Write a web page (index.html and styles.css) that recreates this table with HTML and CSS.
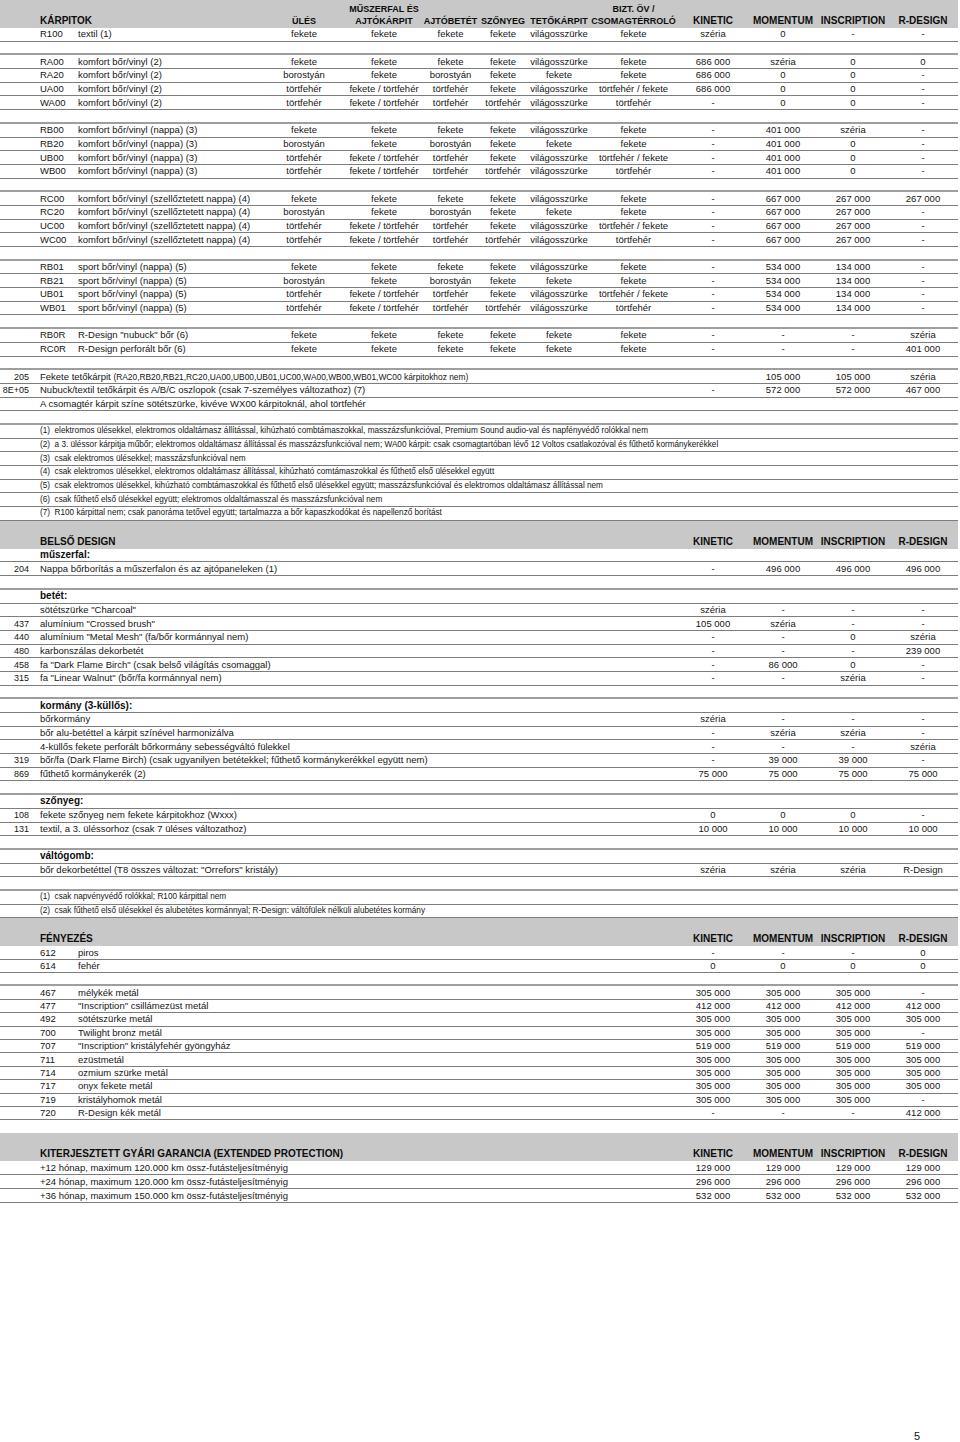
FILE: index.html
```html
<!DOCTYPE html>
<html lang="hu">
<head>
<meta charset="utf-8">
<title>Kárpitok</title>
<link rel="stylesheet" href="styles.css">
</head>
<body>
<div class="sheet">

<section class="sec">
  <div class="grid band">
    <span class="h code-h">KÁRPITOK</span>
    <span class="h hc sm">ÜLÉS</span>
    <span class="h hc sm"><span>MŰSZERFAL ÉS</span><span>AJTÓKÁRPIT</span></span>
    <span class="h hc sm">AJTÓBETÉT</span>
    <span class="h hc sm">SZŐNYEG</span>
    <span class="h hc sm">TETŐKÁRPIT</span>
    <span class="h hc sm"><span>BIZT. ÖV /</span><span>CSOMAGTÉRROLÓ</span></span>
    <span class="h hc">KINETIC</span>
    <span class="h hc">MOMENTUM</span>
    <span class="h hc">INSCRIPTION</span>
    <span class="h hc">R-DESIGN</span>
  </div>

  <div class="grid row"><span class="num"></span><span class="code">R100</span><span class="desc">textil (1)</span><span class="c">fekete</span><span class="c">fekete</span><span class="c">fekete</span><span class="c">fekete</span><span class="c">világosszürke</span><span class="c">fekete</span><span class="c">széria</span><span class="c">0</span><span class="c">-</span><span class="c">-</span></div>
  <div class="grid row gap"></div>

  <div class="grid row"><span class="num"></span><span class="code">RA00</span><span class="desc">komfort bőr/vinyl (2)</span><span class="c">fekete</span><span class="c">fekete</span><span class="c">fekete</span><span class="c">fekete</span><span class="c">világosszürke</span><span class="c">fekete</span><span class="c">686 000</span><span class="c">széria</span><span class="c">0</span><span class="c">0</span></div>
  <div class="grid row"><span class="num"></span><span class="code">RA20</span><span class="desc">komfort bőr/vinyl (2)</span><span class="c">borostyán</span><span class="c">fekete</span><span class="c">borostyán</span><span class="c">fekete</span><span class="c">fekete</span><span class="c">fekete</span><span class="c">686 000</span><span class="c">0</span><span class="c">0</span><span class="c">-</span></div>
  <div class="grid row"><span class="num"></span><span class="code">UA00</span><span class="desc">komfort bőr/vinyl (2)</span><span class="c">törtfehér</span><span class="c">fekete / törtfehér</span><span class="c">törtfehér</span><span class="c">fekete</span><span class="c">világosszürke</span><span class="c">törtfehér / fekete</span><span class="c">686 000</span><span class="c">0</span><span class="c">0</span><span class="c">-</span></div>
  <div class="grid row"><span class="num"></span><span class="code">WA00</span><span class="desc">komfort bőr/vinyl (2)</span><span class="c">törtfehér</span><span class="c">fekete / törtfehér</span><span class="c">törtfehér</span><span class="c">törtfehér</span><span class="c">világosszürke</span><span class="c">törtfehér</span><span class="c">-</span><span class="c">0</span><span class="c">0</span><span class="c">-</span></div>
  <div class="grid row gap"></div>

  <div class="grid row"><span class="num"></span><span class="code">RB00</span><span class="desc">komfort bőr/vinyl (nappa) (3)</span><span class="c">fekete</span><span class="c">fekete</span><span class="c">fekete</span><span class="c">fekete</span><span class="c">világosszürke</span><span class="c">fekete</span><span class="c">-</span><span class="c">401 000</span><span class="c">széria</span><span class="c">-</span></div>
  <div class="grid row"><span class="num"></span><span class="code">RB20</span><span class="desc">komfort bőr/vinyl (nappa) (3)</span><span class="c">borostyán</span><span class="c">fekete</span><span class="c">borostyán</span><span class="c">fekete</span><span class="c">fekete</span><span class="c">fekete</span><span class="c">-</span><span class="c">401 000</span><span class="c">0</span><span class="c">-</span></div>
  <div class="grid row"><span class="num"></span><span class="code">UB00</span><span class="desc">komfort bőr/vinyl (nappa) (3)</span><span class="c">törtfehér</span><span class="c">fekete / törtfehér</span><span class="c">törtfehér</span><span class="c">fekete</span><span class="c">világosszürke</span><span class="c">törtfehér / fekete</span><span class="c">-</span><span class="c">401 000</span><span class="c">0</span><span class="c">-</span></div>
  <div class="grid row"><span class="num"></span><span class="code">WB00</span><span class="desc">komfort bőr/vinyl (nappa) (3)</span><span class="c">törtfehér</span><span class="c">fekete / törtfehér</span><span class="c">törtfehér</span><span class="c">törtfehér</span><span class="c">világosszürke</span><span class="c">törtfehér</span><span class="c">-</span><span class="c">401 000</span><span class="c">0</span><span class="c">-</span></div>
  <div class="grid row gap"></div>

  <div class="grid row"><span class="num"></span><span class="code">RC00</span><span class="desc">komfort bőr/vinyl (szellőztetett nappa) (4)</span><span class="c">fekete</span><span class="c">fekete</span><span class="c">fekete</span><span class="c">fekete</span><span class="c">világosszürke</span><span class="c">fekete</span><span class="c">-</span><span class="c">667 000</span><span class="c">267 000</span><span class="c">267 000</span></div>
  <div class="grid row"><span class="num"></span><span class="code">RC20</span><span class="desc">komfort bőr/vinyl (szellőztetett nappa) (4)</span><span class="c">borostyán</span><span class="c">fekete</span><span class="c">borostyán</span><span class="c">fekete</span><span class="c">fekete</span><span class="c">fekete</span><span class="c">-</span><span class="c">667 000</span><span class="c">267 000</span><span class="c">-</span></div>
  <div class="grid row"><span class="num"></span><span class="code">UC00</span><span class="desc">komfort bőr/vinyl (szellőztetett nappa) (4)</span><span class="c">törtfehér</span><span class="c">fekete / törtfehér</span><span class="c">törtfehér</span><span class="c">fekete</span><span class="c">világosszürke</span><span class="c">törtfehér / fekete</span><span class="c">-</span><span class="c">667 000</span><span class="c">267 000</span><span class="c">-</span></div>
  <div class="grid row"><span class="num"></span><span class="code">WC00</span><span class="desc">komfort bőr/vinyl (szellőztetett nappa) (4)</span><span class="c">törtfehér</span><span class="c">fekete / törtfehér</span><span class="c">törtfehér</span><span class="c">törtfehér</span><span class="c">világosszürke</span><span class="c">törtfehér</span><span class="c">-</span><span class="c">667 000</span><span class="c">267 000</span><span class="c">-</span></div>
  <div class="grid row gap"></div>

  <div class="grid row"><span class="num"></span><span class="code">RB01</span><span class="desc">sport bőr/vinyl (nappa) (5)</span><span class="c">fekete</span><span class="c">fekete</span><span class="c">fekete</span><span class="c">fekete</span><span class="c">világosszürke</span><span class="c">fekete</span><span class="c">-</span><span class="c">534 000</span><span class="c">134 000</span><span class="c">-</span></div>
  <div class="grid row"><span class="num"></span><span class="code">RB21</span><span class="desc">sport bőr/vinyl (nappa) (5)</span><span class="c">borostyán</span><span class="c">fekete</span><span class="c">borostyán</span><span class="c">fekete</span><span class="c">fekete</span><span class="c">fekete</span><span class="c">-</span><span class="c">534 000</span><span class="c">134 000</span><span class="c">-</span></div>
  <div class="grid row"><span class="num"></span><span class="code">UB01</span><span class="desc">sport bőr/vinyl (nappa) (5)</span><span class="c">törtfehér</span><span class="c">fekete / törtfehér</span><span class="c">törtfehér</span><span class="c">fekete</span><span class="c">világosszürke</span><span class="c">törtfehér / fekete</span><span class="c">-</span><span class="c">534 000</span><span class="c">134 000</span><span class="c">-</span></div>
  <div class="grid row"><span class="num"></span><span class="code">WB01</span><span class="desc">sport bőr/vinyl (nappa) (5)</span><span class="c">törtfehér</span><span class="c">fekete / törtfehér</span><span class="c">törtfehér</span><span class="c">törtfehér</span><span class="c">világosszürke</span><span class="c">törtfehér</span><span class="c">-</span><span class="c">534 000</span><span class="c">134 000</span><span class="c">-</span></div>
  <div class="grid row gap"></div>

  <div class="grid row"><span class="num"></span><span class="code">RB0R</span><span class="desc">R-Design "nubuck" bőr (6)</span><span class="c">fekete</span><span class="c">fekete</span><span class="c">fekete</span><span class="c">fekete</span><span class="c">fekete</span><span class="c">fekete</span><span class="c">-</span><span class="c">-</span><span class="c">-</span><span class="c">széria</span></div>
  <div class="grid row"><span class="num"></span><span class="code">RC0R</span><span class="desc">R-Design perforált bőr (6)</span><span class="c">fekete</span><span class="c">fekete</span><span class="c">fekete</span><span class="c">fekete</span><span class="c">fekete</span><span class="c">fekete</span><span class="c">-</span><span class="c">-</span><span class="c">-</span><span class="c">401 000</span></div>
  <div class="grid row gap"></div>

  <div class="grid row"><span class="num">205</span><span class="wide">Fekete tetőkárpit <small class="tiny">(RA20,RB20,RB21,RC20,UA00,UB00,UB01,UC00,WA00,WB00,WB01,WC00 kárpitokhoz nem)</small></span><span class="c"></span><span class="c">105 000</span><span class="c">105 000</span><span class="c">széria</span></div>
  <div class="grid row"><span class="num">8E+05</span><span class="wide">Nubuck/textil tetőkárpit és A/B/C oszlopok (csak 7-személyes változathoz) (7)</span><span class="c">-</span><span class="c">572 000</span><span class="c">572 000</span><span class="c">467 000</span></div>
  <div class="grid row"><span class="num"></span><span class="full">A csomagtér kárpit színe sötétszürke, kivéve WX00 kárpitoknál, ahol törtfehér</span></div>
  <div class="grid row gap"></div>

  <div class="grid row"><span class="num"></span><span class="full note">(1)&nbsp; elektromos ülésekkel, elektromos oldaltámasz állítással, kihúzható combtámaszokkal, masszázsfunkcióval, Premium Sound audio-val és napfényvédő rolókkal nem</span></div>
  <div class="grid row"><span class="num"></span><span class="full note">(2)&nbsp; a 3. üléssor kárpitja műbőr; elektromos oldaltámasz állítással és masszázsfunkcióval nem; WA00 kárpit: csak csomagtartóban lévő 12 Voltos csatlakozóval és fűthető kormánykerékkel</span></div>
  <div class="grid row"><span class="num"></span><span class="full note">(3)&nbsp; csak elektromos ülésekkel; masszázsfunkcióval nem</span></div>
  <div class="grid row"><span class="num"></span><span class="full note">(4)&nbsp; csak elektromos ülésekkel, elektromos oldaltámasz állítással, kihúzható comtámaszokkal és fűthető első ülésekkel együtt</span></div>
  <div class="grid row"><span class="num"></span><span class="full note">(5)&nbsp; csak elektromos ülésekkel, kihúzható combtámaszokkal és fűthető első ülésekkel együtt; masszázsfunkcióval és elektromos oldaltámasz állítással nem</span></div>
  <div class="grid row"><span class="num"></span><span class="full note">(6)&nbsp; csak fűthető első ülésekkel együtt; elektromos oldaltámasszal és masszázsfunkcióval nem</span></div>
  <div class="grid row"><span class="num"></span><span class="full note">(7)&nbsp; R100 kárpittal nem; csak panoráma tetővel együtt; tartalmazza a bőr kapaszkodókat és napellenző borítást</span></div>
</section>

<section class="sec">
  <div class="grid band">
    <span class="h title">BELSŐ DESIGN</span>
    <span class="h hc">KINETIC</span>
    <span class="h hc">MOMENTUM</span>
    <span class="h hc">INSCRIPTION</span>
    <span class="h hc">R-DESIGN</span>
  </div>
  <div class="grid row"><span class="num"></span><span class="full sub">műszerfal:</span></div>
  <div class="grid row"><span class="num">204</span><span class="wide">Nappa bőrborítás a műszerfalon és az ajtópaneleken (1)</span><span class="c">-</span><span class="c">496 000</span><span class="c">496 000</span><span class="c">496 000</span></div>
  <div class="grid row gap"></div>

  <div class="grid row"><span class="num"></span><span class="full sub">betét:</span></div>
  <div class="grid row"><span class="num"></span><span class="wide">sötétszürke "Charcoal"</span><span class="c">széria</span><span class="c">-</span><span class="c">-</span><span class="c">-</span></div>
  <div class="grid row"><span class="num">437</span><span class="wide">alumínium "Crossed brush"</span><span class="c">105 000</span><span class="c">széria</span><span class="c">-</span><span class="c">-</span></div>
  <div class="grid row"><span class="num">440</span><span class="wide">alumínium "Metal Mesh" (fa/bőr kormánnyal nem)</span><span class="c">-</span><span class="c">-</span><span class="c">0</span><span class="c">széria</span></div>
  <div class="grid row"><span class="num">480</span><span class="wide">karbonszálas dekorbetét</span><span class="c">-</span><span class="c">-</span><span class="c">-</span><span class="c">239 000</span></div>
  <div class="grid row"><span class="num">458</span><span class="wide">fa "Dark Flame Birch" (csak belső világítás csomaggal)</span><span class="c">-</span><span class="c">86 000</span><span class="c">0</span><span class="c">-</span></div>
  <div class="grid row"><span class="num">315</span><span class="wide">fa "Linear Walnut" (bőr/fa kormánnyal nem)</span><span class="c">-</span><span class="c">-</span><span class="c">széria</span><span class="c">-</span></div>
  <div class="grid row gap"></div>

  <div class="grid row"><span class="num"></span><span class="full sub">kormány (3-küllős):</span></div>
  <div class="grid row"><span class="num"></span><span class="wide">bőrkormány</span><span class="c">széria</span><span class="c">-</span><span class="c">-</span><span class="c">-</span></div>
  <div class="grid row"><span class="num"></span><span class="wide">bőr alu-betéttel a kárpit színével harmonizálva</span><span class="c">-</span><span class="c">széria</span><span class="c">széria</span><span class="c">-</span></div>
  <div class="grid row"><span class="num"></span><span class="wide">4-küllős fekete perforált bőrkormány sebességváltó fülekkel</span><span class="c">-</span><span class="c">-</span><span class="c">-</span><span class="c">széria</span></div>
  <div class="grid row"><span class="num">319</span><span class="wide">bőr/fa (Dark Flame Birch) (csak ugyanilyen betétekkel; fűthető kormánykerékkel együtt nem)</span><span class="c">-</span><span class="c">39 000</span><span class="c">39 000</span><span class="c">-</span></div>
  <div class="grid row"><span class="num">869</span><span class="wide">fűthető kormánykerék (2)</span><span class="c">75 000</span><span class="c">75 000</span><span class="c">75 000</span><span class="c">75 000</span></div>
  <div class="grid row gap"></div>

  <div class="grid row"><span class="num"></span><span class="full sub">szőnyeg:</span></div>
  <div class="grid row"><span class="num">108</span><span class="wide">fekete szőnyeg nem fekete kárpitokhoz (Wxxx)</span><span class="c">0</span><span class="c">0</span><span class="c">0</span><span class="c">-</span></div>
  <div class="grid row"><span class="num">131</span><span class="wide">textil, a 3. üléssorhoz (csak 7 üléses változathoz)</span><span class="c">10 000</span><span class="c">10 000</span><span class="c">10 000</span><span class="c">10 000</span></div>
  <div class="grid row gap"></div>

  <div class="grid row"><span class="num"></span><span class="full sub">váltógomb:</span></div>
  <div class="grid row"><span class="num"></span><span class="wide">bőr dekorbetéttel (T8 összes változat: "Orrefors" kristály)</span><span class="c">széria</span><span class="c">széria</span><span class="c">széria</span><span class="c">R-Design</span></div>
  <div class="grid row gap"></div>

  <div class="grid row"><span class="num"></span><span class="full note">(1)&nbsp; csak napvényvédő rolókkal; R100 kárpittal nem</span></div>
  <div class="grid row"><span class="num"></span><span class="full note">(2)&nbsp; csak fűthető első ülésekkel és alubetétes kormánnyal; R-Design: váltófülek nélküli alubetétes kormány</span></div>
</section>

<section class="sec paint">
  <div class="grid band">
    <span class="h title">FÉNYEZÉS</span>
    <span class="h hc">KINETIC</span>
    <span class="h hc">MOMENTUM</span>
    <span class="h hc">INSCRIPTION</span>
    <span class="h hc">R-DESIGN</span>
  </div>
  <div class="grid row"><span class="num"></span><span class="code">612</span><span class="mid">piros</span><span class="c">-</span><span class="c">-</span><span class="c">-</span><span class="c">0</span></div>
  <div class="grid row"><span class="num"></span><span class="code">614</span><span class="mid">fehér</span><span class="c">0</span><span class="c">0</span><span class="c">0</span><span class="c">0</span></div>
  <div class="grid row gap"></div>
  <div class="grid row"><span class="num"></span><span class="code">467</span><span class="mid">mélykék metál</span><span class="c">305 000</span><span class="c">305 000</span><span class="c">305 000</span><span class="c">-</span></div>
  <div class="grid row"><span class="num"></span><span class="code">477</span><span class="mid">"Inscription" csillámezüst metál</span><span class="c">412 000</span><span class="c">412 000</span><span class="c">412 000</span><span class="c">412 000</span></div>
  <div class="grid row"><span class="num"></span><span class="code">492</span><span class="mid">sötétszürke metál</span><span class="c">305 000</span><span class="c">305 000</span><span class="c">305 000</span><span class="c">305 000</span></div>
  <div class="grid row"><span class="num"></span><span class="code">700</span><span class="mid">Twilight bronz metál</span><span class="c">305 000</span><span class="c">305 000</span><span class="c">305 000</span><span class="c">-</span></div>
  <div class="grid row"><span class="num"></span><span class="code">707</span><span class="mid">"Inscription" kristályfehér gyöngyház</span><span class="c">519 000</span><span class="c">519 000</span><span class="c">519 000</span><span class="c">519 000</span></div>
  <div class="grid row"><span class="num"></span><span class="code">711</span><span class="mid">ezüstmetál</span><span class="c">305 000</span><span class="c">305 000</span><span class="c">305 000</span><span class="c">305 000</span></div>
  <div class="grid row"><span class="num"></span><span class="code">714</span><span class="mid">ozmium szürke metál</span><span class="c">305 000</span><span class="c">305 000</span><span class="c">305 000</span><span class="c">305 000</span></div>
  <div class="grid row"><span class="num"></span><span class="code">717</span><span class="mid">onyx fekete metál</span><span class="c">305 000</span><span class="c">305 000</span><span class="c">305 000</span><span class="c">305 000</span></div>
  <div class="grid row"><span class="num"></span><span class="code">719</span><span class="mid">kristályhomok metál</span><span class="c">305 000</span><span class="c">305 000</span><span class="c">305 000</span><span class="c">-</span></div>
  <div class="grid row"><span class="num"></span><span class="code">720</span><span class="mid">R-Design kék metál</span><span class="c">-</span><span class="c">-</span><span class="c">-</span><span class="c">412 000</span></div>
</section>

<section class="sec warranty">
  <div class="grid band">
    <span class="h title">KITERJESZTETT GYÁRI GARANCIA (EXTENDED PROTECTION)</span>
    <span class="h hc">KINETIC</span>
    <span class="h hc">MOMENTUM</span>
    <span class="h hc">INSCRIPTION</span>
    <span class="h hc">R-DESIGN</span>
  </div>
  <div class="grid row"><span class="num"></span><span class="wide">+12 hónap, maximum 120.000 km össz-futásteljesítményig</span><span class="c">129 000</span><span class="c">129 000</span><span class="c">129 000</span><span class="c">129 000</span></div>
  <div class="grid row"><span class="num"></span><span class="wide">+24 hónap, maximum 120.000 km össz-futásteljesítményig</span><span class="c">296 000</span><span class="c">296 000</span><span class="c">296 000</span><span class="c">296 000</span></div>
  <div class="grid row"><span class="num"></span><span class="wide">+36 hónap, maximum 150.000 km össz-futásteljesítményig</span><span class="c">532 000</span><span class="c">532 000</span><span class="c">532 000</span><span class="c">532 000</span></div>
</section>

<footer class="pageno">5</footer>
</div>
</body>
</html>
```

FILE: styles.css
```css
* {
  box-sizing: border-box;
  margin: 0;
  padding: 0;
}

html, body {
  background: #ffffff;
}

body {
  width: 960px;
  font-family: "Liberation Sans", Arial, sans-serif;
  font-size: 9.5px;
  line-height: 12px;
  color: #151515;
}

.sheet {
  width: 958px;
}

.grid {
  display: grid;
  grid-template-columns: 33px 45px 186px 80px 80px 53px 52px 60px 89px 70px 70px 70px 70px;
}

.band {
  background: #c8c8c8;
  height: 28px;
  align-items: end;
  padding-bottom: 1px;
  font-weight: bold;
  font-size: 10px;
  line-height: 12px;
  color: #0d0d0d;
}

.h {
  white-space: nowrap;
}

.code-h {
  grid-column: 2 / 4;
  padding-left: 7px;
}

.title {
  grid-column: 2 / 10;
  padding-left: 7px;
}

.hc {
  display: flex;
  flex-direction: column;
  align-items: center;
}

.hc.sm {
  font-size: 9px;
}

.row {
  height: 13.69px;
  border-bottom: 1px solid #7d7d7d;
  align-items: center;
}

.row.gap {
  border-bottom: 2px solid #9e9e9e;
}

.paint .row {
  height: 13.4px;
}

.warranty {
  margin-top: 13px;
}

.warranty .row {
  height: 14px;
}

.num {
  text-align: right;
  padding-right: 4px;
  white-space: nowrap;
  font-size: 9px;
}

.code {
  padding-left: 7px;
  white-space: nowrap;
}

.desc {
  white-space: nowrap;
}

.mid {
  grid-column: 3 / 10;
  white-space: nowrap;
}

.wide {
  grid-column: 2 / 10;
  padding-left: 7px;
  white-space: nowrap;
}

.full {
  grid-column: 2 / 14;
  padding-left: 7px;
  white-space: nowrap;
}

.sub {
  font-weight: bold;
  font-size: 10px;
  color: #0d0d0d;
}

.note {
  font-size: 8.2px;
}

.tiny {
  font-size: 8.4px;
}

.c {
  display: flex;
  justify-content: center;
  white-space: nowrap;
}

.pageno {
  margin-top: 227px;
  display: flex;
  justify-content: flex-end;
  padding-right: 38px;
  font-size: 11px;
  line-height: 12px;
}
```
